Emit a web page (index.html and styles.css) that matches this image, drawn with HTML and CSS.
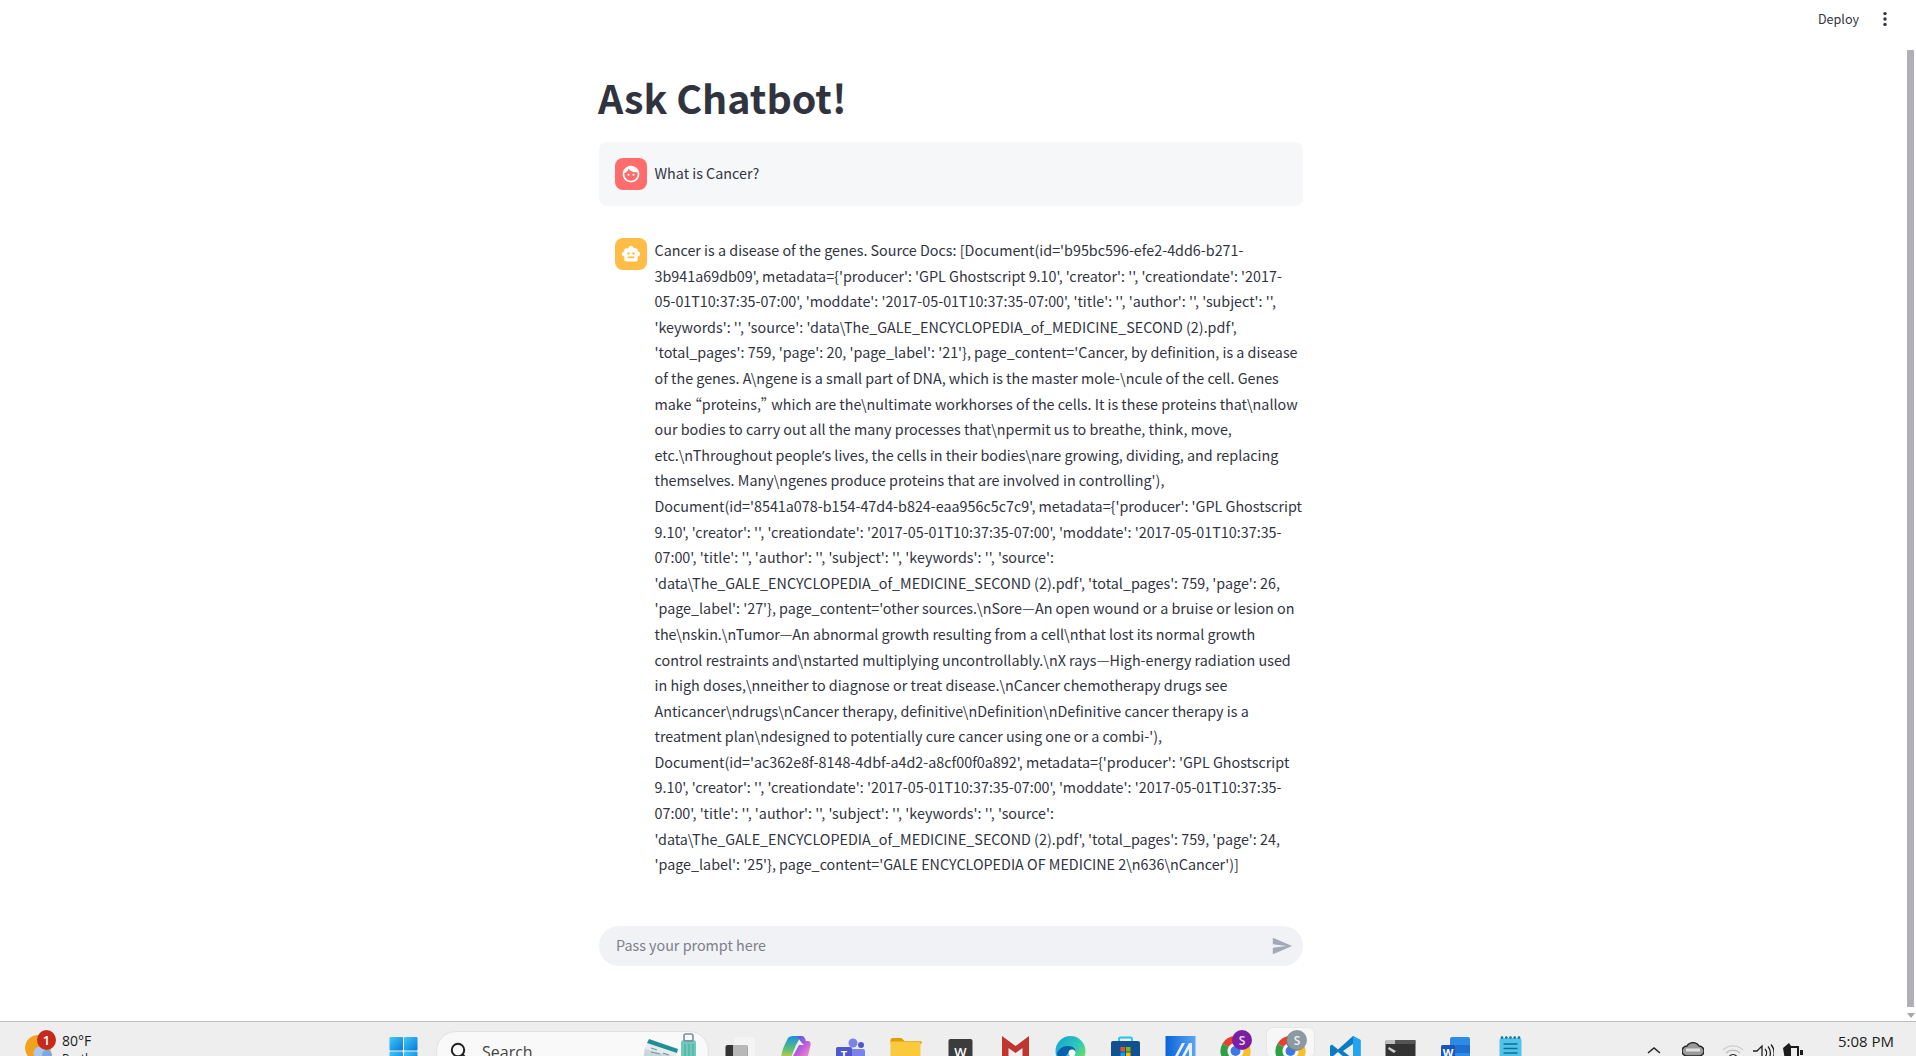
FILE: index.html
```html
<!DOCTYPE html>
<html lang="en">
<head>
<meta charset="utf-8">
<title>Ask Chatbot!</title>
<link rel="stylesheet" href="styles.css">
</head>
<body>
<div class="screen">
  <div class="browser">
    <div class="app">
      <header class="topbar">
        <span class="deploy">Deploy</span>
        <svg class="kebab" width="16" height="16" viewBox="0 0 16 16"><circle cx="8" cy="2.6" r="1.7"/><circle cx="8" cy="8" r="1.7"/><circle cx="8" cy="13.4" r="1.7"/></svg>
      </header>
      <main class="column">
        <h1 class="title">Ask Chatbot!</h1>
        <section class="msg msg-user">
          <div class="avatar avatar-user">
            <svg width="20" height="20" viewBox="0 0 24 24"><path d="M9 11.75c-.69 0-1.25.56-1.25 1.25s.56 1.25 1.25 1.25 1.25-.56 1.25-1.25-.56-1.25-1.25-1.25zm6 0c-.69 0-1.25.56-1.25 1.25s.56 1.25 1.25 1.25 1.25-.56 1.25-1.25-.56-1.25-1.25-1.25zM12 2C6.48 2 2 6.48 2 12s4.48 10 10 10 10-4.48 10-10S17.52 2 12 2zm0 18c-4.41 0-8-3.59-8-8 0-.29.02-.58.05-.86 2.36-1.05 4.23-2.98 5.21-5.37C11.07 8.33 14.05 10 17.42 10c.78 0 1.53-.09 2.25-.26.21.71.33 1.47.33 2.26 0 4.41-3.59 8-8 8z"/></svg>
          </div>
          <p class="msg-text">What is Cancer?</p>
        </section>
        <section class="msg msg-bot">
          <div class="avatar avatar-bot">
            <svg width="20" height="20" viewBox="0 0 24 24"><path d="M20 9V7c0-1.1-.9-2-2-2h-3c0-1.66-1.34-3-3-3S9 3.34 9 5H6c-1.1 0-2 .9-2 2v2c-1.66 0-3 1.34-3 3s1.34 3 3 3v4c0 1.1.9 2 2 2h12c1.1 0 2-.9 2-2v-4c1.66 0 3-1.34 3-3s-1.34-3-3-3zM7.5 11.5c0-.83.67-1.5 1.5-1.5s1.5.67 1.5 1.5S9.83 13 9 13s-1.5-.67-1.5-1.5zM16 17H8v-2h8v2zm-1-4c-.83 0-1.5-.67-1.5-1.5S14.17 10 15 10s1.5.67 1.5 1.5S15.83 13 15 13z"/></svg>
          </div>
          <p class="msg-text">Cancer is a disease of the genes. Source Docs: [Document(id='b95bc596-efe2-4dd6-b271-3b941a69db09', metadata={'producer': 'GPL Ghostscript 9.10', 'creator': '', 'creationdate': '2017-05-01T10:37:35-07:00', 'moddate': '2017-05-01T10:37:35-07:00', 'title': '', 'author': '', 'subject': '', 'keywords': '', 'source': 'data\The_GALE_ENCYCLOPEDIA_of_MEDICINE_SECOND (2).pdf', 'total_pages': 759, 'page': 20, 'page_label': '21'}, page_content='Cancer, by definition, is a disease of the genes. A\ngene is a small part of DNA, which is the master mole-\ncule of the cell. Genes make “proteins,” which are the\nultimate workhorses of the cells. It is these proteins that\nallow our bodies to carry out all the many processes that\npermit us to breathe, think, move, etc.\nThroughout people<span class="punct">’</span>s lives, the cells in their bodies\nare growing, dividing, and replacing themselves. Many\ngenes produce proteins that are involved in controlling'), Document(id='8541a078-b154-47d4-b824-eaa956c5c7c9', metadata={'producer': 'GPL Ghostscript 9.10', 'creator': '', 'creationdate': '2017-05-01T10:37:35-07:00', 'moddate': '2017-05-01T10:37:35-07:00', 'title': '', 'author': '', 'subject': '', 'keywords': '', 'source': 'data\The_GALE_ENCYCLOPEDIA_of_MEDICINE_SECOND (2).pdf', 'total_pages': 759, 'page': 26, 'page_label': '27'}, page_content='other sources.\nSore—An open wound or a bruise or lesion on the\nskin.\nTumor—An abnormal growth resulting from a cell\nthat lost its normal growth control restraints and\nstarted multiplying uncontrollably.\nX rays—High-energy radiation used in high doses,\nneither to diagnose or treat disease.\nCancer chemotherapy drugs see Anticancer\ndrugs\nCancer therapy, definitive\nDefinition\nDefinitive cancer therapy is a treatment plan\ndesigned to potentially cure cancer using one or a combi-'), Document(id='ac362e8f-8148-4dbf-a4d2-a8cf00f0a892', metadata={'producer': 'GPL Ghostscript 9.10', 'creator': '', 'creationdate': '2017-05-01T10:37:35-07:00', 'moddate': '2017-05-01T10:37:35-07:00', 'title': '', 'author': '', 'subject': '', 'keywords': '', 'source': 'data\The_GALE_ENCYCLOPEDIA_of_MEDICINE_SECOND (2).pdf', 'total_pages': 759, 'page': 24, 'page_label': '25'}, page_content='GALE ENCYCLOPEDIA OF MEDICINE 2\n636\nCancer')]</p>
        </section>
        <div class="prompt">
          <span class="prompt-text">Pass your prompt here</span>
          <svg class="send" width="22" height="22" viewBox="0 0 24 24"><path d="M2.01 21L23 12 2.01 3 2 10l15 2-15 2z"/></svg>
        </div>
      </main>
    </div>
    <aside class="scrollbar">
      <div class="scroll-thumb"></div>
      <div class="scroll-arrow"></div>
    </aside>
  </div>

  <footer class="taskbar">
    <div class="weather">
      <div class="weather-icon">
        <svg width="36" height="30" viewBox="0 0 36 30">
          <circle cx="13" cy="22" r="13" fill="#f2a21f"/>
          <circle cx="15" cy="27" r="6.5" fill="#a9c8ee"/>
          <circle cx="22" cy="29" r="5" fill="#7da7e0"/>
        </svg>
        <span class="badge">1</span>
      </div>
      <div class="weather-text">
        <span class="temp">80°F</span>
        <span class="cond">Partly</span>
      </div>
    </div>
    <div class="slot">
      <svg width="55" height="30" viewBox="0 0 55 30">
        <defs><linearGradient id="win" x1="0" y1="0" x2="1" y2="1"><stop offset="0" stop-color="#3ccbf8"/><stop offset="1" stop-color="#0a78d7"/></linearGradient></defs>
        <rect x="13.5" y="11" width="13.5" height="13.5" rx="1" fill="url(#win)"/>
        <rect x="28" y="11" width="13.5" height="13.5" rx="1" fill="url(#win)"/>
        <rect x="13.5" y="25.5" width="13.5" height="13.5" rx="1" fill="url(#win)"/>
        <rect x="28" y="25.5" width="13.5" height="13.5" rx="1" fill="url(#win)"/>
      </svg>
    </div>
    <div class="searchbox">
      <svg class="search-glass" width="18" height="18" viewBox="0 0 18 18"><circle cx="8" cy="8" r="6.2" fill="none" stroke="#222" stroke-width="2"/><path d="M12.5 12.5l4.5 4.5" stroke="#222" stroke-width="2"/></svg>
      <span class="search-label">Search</span>
      <svg class="search-art" width="60" height="28" viewBox="0 0 60 28">
        <path d="M2 14L33 20 30 28H0z" fill="#c9d6dc"/>
        <path d="M4 10L34 19 33 24 2 16z" fill="#e6ecee"/>
        <path d="M6 6l29 10-1 4L4 10z" fill="#1f8f96"/>
        <path d="M8 15l6 2M8 19l9 2M20 20l6 2" stroke="#7a93a0" stroke-width="1.200"/>
        <rect x="38" y="7" width="15" height="22" rx="3" fill="#6fcabd"/>
        <rect x="41" y="1" width="9" height="7" rx="2" fill="none" stroke="#78909c" stroke-width="1.6"/>
        <path d="M42 11v14M46 11v14M50 11v14" stroke="#3ea89b"/>
      </svg>
    </div>
    <div class="apps">
      <div class="slot">
        <svg width="55" height="30" viewBox="0 0 55 30">
          <rect x="21" y="11" width="21" height="21" rx="2" fill="#f4f4f4"/>
          <rect x="12.5" y="19" width="22" height="15" rx="2" fill="#333"/>
          <rect x="20" y="19" width="14.5" height="15" fill="#b8b8b8"/>
        </svg>
      </div>
      <div class="slot">
        <svg width="55" height="30" viewBox="0 0 55 30">
          <defs>
            <linearGradient id="cop1" x1="0" y1="0" x2="0" y2="1"><stop offset="0" stop-color="#1c8fe0"/><stop offset=".55" stop-color="#57c27a"/><stop offset="1" stop-color="#f2c83a"/></linearGradient>
            <linearGradient id="cop2" x1="0" y1="0" x2="1" y2="1"><stop offset="0" stop-color="#2a5be0"/><stop offset=".6" stop-color="#c65fd8"/><stop offset="1" stop-color="#f39ac0"/></linearGradient>
          </defs>
          <path d="M19 14c1-3 3-4 6-4h8l-5 9-6 15H13c0-8 3-14 6-20z" fill="url(#cop1)"/>
          <path d="M29 10h5c2 0 3 2 4 5h2c2 0 3 2 2.600 4L40 30H25l6-11h5l-3-3z" fill="url(#cop2)"/>
        </svg>
      </div>
      <div class="slot">
        <svg width="55" height="30" viewBox="0 0 55 30">
          <circle cx="30" cy="17" r="4.500" fill="#7b83eb"/>
          <circle cx="38" cy="19" r="3" fill="#4f58ca"/>
          <rect x="26" y="23" width="16" height="12" rx="2" fill="#7b83eb"/>
          <rect x="13" y="21" width="16" height="16" rx="1.500" fill="#4f58ca"/>
          <text x="21" y="33" class="t-teams">T</text>
        </svg>
      </div>
      <div class="slot">
        <svg width="55" height="30" viewBox="0 0 55 30">
          <path d="M12.500 14c0-1 .8-2 2-2h9l3 3h16c1 0 1 .6 1 1v2h-31z" fill="#dc9f0a"/>
          <rect x="12.500" y="15.500" width="30" height="18" rx="1" fill="#fbc93c"/>
        </svg>
      </div>
      <div class="slot">
        <svg width="55" height="30" viewBox="0 0 55 30">
          <rect x="15.500" y="13" width="24" height="22" rx="2" fill="#3c3c3c"/>
          <text x="27.500" y="31" class="t-w">W</text>
        </svg>
      </div>
      <div class="slot">
        <svg width="55" height="30" viewBox="0 0 55 30">
          <path d="M14 10l13.500 10L41 10v24h-6.500V22l-7 5-7-5v12H14z" fill="#c1352f"/>
        </svg>
      </div>
      <div class="slot">
        <svg width="55" height="30" viewBox="0 0 55 30">
          <defs><linearGradient id="edge" x1="0" y1="0" x2="1" y2=".8"><stop offset="0" stop-color="#12a0d8"/><stop offset=".6" stop-color="#2ec9b8"/><stop offset="1" stop-color="#7ce05a"/></linearGradient></defs>
          <circle cx="27.500" cy="25" r="15" fill="url(#edge)"/>
          <path d="M14 28c2-8 12-10 17-6 3 3 1 7-2 8-1-3-4-4-6 0-1 2 0 4 2 6-6 0-10-3-11-8z" fill="#0c5fae"/>
          <circle cx="29" cy="27" r="3.500" fill="#fff"/>
        </svg>
      </div>
      <div class="slot">
        <svg width="55" height="30" viewBox="0 0 55 30">
          <path d="M21 16v-3c0-1 1-1.500 2-1.500h9c1 0 2 .5 2 1.500v3" fill="none" stroke="#27c1ee" stroke-width="1.800"/>
          <rect x="13" y="15" width="29" height="22" rx="2" fill="#12508f"/>
          <rect x="22.500" y="21" width="4.500" height="4.500" fill="#f25022"/>
          <rect x="28" y="21" width="4.500" height="4.500" fill="#7fba00"/>
          <rect x="22.500" y="26.500" width="4.500" height="4.500" fill="#00a4ef"/>
          <rect x="28" y="26.500" width="4.500" height="4.500" fill="#ffb900"/>
        </svg>
      </div>
      <div class="slot">
        <svg width="55" height="30" viewBox="0 0 55 30">
          <defs><linearGradient id="ia" x1="0" y1="0" x2="1" y2="0"><stop offset="0" stop-color="#0a63d8"/><stop offset="1" stop-color="#5aa5f5"/></linearGradient></defs>
          <rect x="12.500" y="10" width="30" height="26" fill="url(#ia)"/>
          <path d="M22 30l7-13h3l-7 13zM29 30l7-13h3v13h-3v-7l-4 7z" fill="#e8f1fd"/>
        </svg>
      </div>
      <div class="slot">
        <svg width="55" height="30" viewBox="0 0 55 30">
          <path d="M17.540 19.250A11.500 11.500 0 0 1 37.460 19.250" fill="none" stroke="#e5412f" stroke-width="7"/>
          <path d="M27.500 36.500A11.500 11.500 0 0 1 17.540 19.250" fill="none" stroke="#2f9e47" stroke-width="7"/>
          <path d="M37.460 19.250A11.500 11.500 0 0 1 27.500 36.500" fill="none" stroke="#f5c02c" stroke-width="7"/>
          <circle cx="27.500" cy="25" r="6" fill="#fff"/>
          <circle cx="27.500" cy="25" r="5" fill="#3d78e6"/>
          <circle cx="34" cy="14" r="10" fill="#7b1fa2"/>
          <text x="34" y="18.500" class="t-s">S</text>
        </svg>
      </div>
      <div class="slot">
        <svg width="55" height="30" viewBox="0 0 55 30">
          <rect x="3.500" y="1.500" width="48" height="30" rx="6" fill="#f7f7f7" stroke="#e6e6e6"/>
          <path d="M17.540 19.250A11.500 11.500 0 0 1 37.460 19.250" fill="none" stroke="#e5412f" stroke-width="7"/>
          <path d="M27.500 36.500A11.500 11.500 0 0 1 17.540 19.250" fill="none" stroke="#2f9e47" stroke-width="7"/>
          <path d="M37.460 19.250A11.500 11.500 0 0 1 27.500 36.500" fill="none" stroke="#f5c02c" stroke-width="7"/>
          <circle cx="27.500" cy="25" r="6" fill="#fff"/>
          <circle cx="27.500" cy="25" r="5" fill="#3d78e6"/>
          <circle cx="33" cy="15" r="10" fill="#6f7a82"/>
          <circle cx="34" cy="14" r="10" fill="#8c99a1"/>
          <text x="34" y="18.500" class="t-s">S</text>
        </svg>
      </div>
      <div class="slot">
        <svg width="55" height="30" viewBox="0 0 55 30">
          <path d="M35 10l7.500 4v21L35 39 20 26l-6 5-2-1.500V20l2-1.500 6 5z" fill="#0a7cc4"/>
          <path d="M35 10l7.500 4v21L35 39z" fill="#22a5f0"/>
          <path d="M35 18L25 25l10 8z" fill="#eeeeee"/>
        </svg>
      </div>
      <div class="slot">
        <svg width="55" height="30" viewBox="0 0 55 30">
          <rect x="12.500" y="14" width="30" height="24" rx="2" fill="#333"/>
          <rect x="12.500" y="14" width="30" height="4" fill="#bdbdbd"/>
          <rect x="22" y="14" width="20.500" height="4" fill="#555"/>
          <path d="M16 21l7 4-2 2-6-4z" fill="#cfcfcf"/>
        </svg>
      </div>
      <div class="slot">
        <svg width="55" height="30" viewBox="0 0 55 30">
          <rect x="22" y="11" width="20" height="24" rx="2" fill="#2d8be8"/>
          <rect x="22" y="19" width="20" height="8" fill="#1f6fd0"/>
          <rect x="13" y="19" width="14" height="16" rx="1.500" fill="#1a56b8"/>
          <text x="20" y="31" class="t-word">W</text>
        </svg>
      </div>
      <div class="slot">
        <svg width="55" height="30" viewBox="0 0 55 30">
          <rect x="16.500" y="12" width="22" height="26" rx="2" fill="#4fc3e8"/>
          <g fill="#0e6f96"><circle cx="19" cy="11.500" r="1.300"/><circle cx="23.300" cy="11.500" r="1.300"/><circle cx="27.500" cy="11.500" r="1.300"/><circle cx="31.700" cy="11.500" r="1.300"/><circle cx="36" cy="11.500" r="1.300"/></g>
          <path d="M20.500 18h14M20.500 22.500h14M20.500 27h14" stroke="#0e6f96" stroke-width="1.600"/>
        </svg>
      </div>
    </div>
    <div class="tray">
      <svg class="tray-chevron" width="16" height="30" viewBox="0 0 16 30"><path d="M2 27l6-5 6 5" fill="none" stroke="#222" stroke-width="1.500"/></svg>
      <svg class="tray-cloud" width="22" height="30" viewBox="0 0 22 30"><path d="M5 30a5 5 0 0 1 0-10 7 7 0 0 1 12 0 5 5 0 0 1 0 10z" fill="#9a9a9a" stroke="#222" stroke-width="1.400"/><path d="M4 24h14" stroke="#e0e0e0" stroke-width="3"/></svg>
      <svg class="tray-wifi" width="22" height="30" viewBox="0 0 22 30"><g fill="none" stroke-width="1.300"><path d="M1 24a14 14 0 0 1 20 0" stroke="#cfcfcf"/><path d="M4 27a10 10 0 0 1 14 0" stroke="#bcbcbc"/><path d="M7.500 30a5 5 0 0 1 7 0" stroke="#222"/></g></svg>
      <svg class="tray-speaker" width="22" height="30" viewBox="0 0 22 30"><path d="M1 25h4l5-5v14" fill="none" stroke="#222" stroke-width="1.300"/><g fill="none" stroke="#222" stroke-width="1.300"><path d="M13 23a6 6 0 0 1 0 8"/><path d="M16 20.500a10 10 0 0 1 0 13"/><path d="M19 18.500a13 13 0 0 1 0 17"/></g></svg>
      <svg class="tray-battery" width="22" height="30" viewBox="0 0 22 30"><path d="M1 22l6-5 2 3h8v14H3z" fill="#1c1c1c"/><path d="M9 22h6v8H9z" fill="#eee"/><path d="M18 24h3v5h-3z" fill="#1c1c1c"/></svg>
      <div class="clock"><span>5:08 PM</span><span>7/27/2025</span></div>
    </div>
  </footer>
</div>
</body>
</html>
```
FILE: styles.css
```css
* { box-sizing: border-box; }
html, body { margin: 0; height: 100%; overflow: hidden; background: #fff; }
body { font-family: "Noto Sans CJK SC", "Liberation Sans", sans-serif; color: #31333f; font-feature-settings: "palt"; }
.screen { height: 1056px; overflow: hidden; display: flex; flex-direction: column; }

.browser { flex: none; height: 1021px; display: flex; }
.app { flex: 1; min-width: 0; display: flex; flex-direction: column; }
.topbar { height: 38px; flex: none; display: flex; align-items: center; justify-content: flex-end; padding-right: 9px; margin-bottom: 2px; }
.deploy { font-size: 12.55px; line-height: 20px; margin-right: 18px; }
.kebab { fill: #31333f; }

.column { width: 704px; margin: 0 auto; display: flex; flex-direction: column; }
.title { margin: 29px 0 0 -1px; font-size: 39.4px; line-height: 55px; font-weight: 700; height: 73px; }
.msg { display: flex; gap: 7.5px; padding: 16px 0 16px 16px; border-radius: 8px; }
.msg-user { background: #f6f7f9; }
.msg-bot { margin-top: 16px; padding-bottom: 0; padding-right: 0.8px; }
.avatar { flex: none; width: 32px; height: 32px; border-radius: 8px; display: flex; align-items: center; justify-content: center; }
.avatar svg { fill: #fff; }
.avatar-user { background: #ff6c6c; }
.avatar-bot { background: #ffbd45; }
.msg-text { flex: 1; min-width: 0; font-size: 14.34px; line-height: 25.6px; overflow-wrap: break-word; }
.msg-bot .msg-text { margin: -1px 0 1px; }
.msg-user .msg-text { margin: 0; line-height: 29px; }
.punct { font-family: "Noto Sans", sans-serif; font-size: 14px; line-height: 0; }
.prompt { margin-top: 48px; height: 40px; border-radius: 20px; background: #f0f2f6; display: flex; align-items: center; justify-content: space-between; padding: 0 10px 0 17px; }
.prompt-text { font-size: 14.34px; line-height: 24px; color: #7d7f88; margin-bottom: 2px; }
.send { fill: #a3a8b8; }

.scrollbar { flex: none; width: 14px; padding: 50px 2px 0 5px; display: flex; flex-direction: column; align-items: stretch; }
.scroll-thumb { height: 957px; width: 7px; background: #b0b0b6; }
.scroll-arrow { margin-top: 6px; width: 0; height: 0; border-left: 4px solid transparent; border-right: 4px solid transparent; border-top: 5px solid #a8a8a8; }

.taskbar { flex: none; height: 48px; background: #eeeeee; border-top: 1px solid #bdbdbd; padding: 4px 0 0 25px; display: flex; align-items: flex-start; font-family: "Open Sans", "Liberation Sans", sans-serif; color: #1c1c1c; font-feature-settings: normal; }
.weather { width: 350.5px; flex: none; display: flex; }
.weather-icon { position: relative; width: 37px; height: 30px; }
.badge { position: absolute; left: 12px; top: 4px; width: 19px; height: 20px; border-radius: 50%; background: #c42b1c; color: #fff; font-size: 13px; font-weight: 600; line-height: 20px; text-align: center; }
.weather-text { display: flex; flex-direction: column; font-size: 14px; line-height: 18px; padding-top: 6px; }
.cond { font-size: 12px; }
.slot { flex: none; width: 55px; height: 30px; }
.slot svg { display: block; overflow: hidden; }
.searchbox { flex: none; width: 273px; height: 40px; margin: 5px 3.5px 0 5.5px; background: #f9f9f9; border: 1px solid #e2e2e2; border-radius: 20px; display: flex; align-items: flex-start; padding: 10px 0 0 13px; }
.search-glass { flex: none; }
.search-label { margin-left: 14px; font-size: 16px; line-height: 20px; color: #444; }
.search-art { margin-left: auto; margin-right: 5px; margin-top: -9px; }
.apps { display: flex; flex: none; }
.t-teams { font: 700 11px "Open Sans", sans-serif; fill: #fff; text-anchor: middle; }
.t-w { font: 600 13px "Open Sans", sans-serif; fill: #fff; text-anchor: middle; }
.t-s { font: 600 12px "Open Sans", sans-serif; fill: #fff; text-anchor: middle; opacity: .85; }
.t-word { font: 700 11px "Open Sans", sans-serif; fill: #fff; text-anchor: middle; }
.tray { flex: 1; display: flex; align-items: flex-start; justify-content: flex-end; padding-right: 22px; }
.tray svg { display: block; flex: none; }
.tray-chevron { margin-right: 20px; }
.tray-cloud { margin-right: 18px; }
.tray-wifi { margin-right: 8px; }
.tray-speaker { margin-right: 8px; }
.clock { margin-left: 20px; width: 70px; display: flex; flex-direction: column; align-items: flex-end; font-size: 15px; line-height: 21px; padding-top: 5px; white-space: nowrap; }
```
